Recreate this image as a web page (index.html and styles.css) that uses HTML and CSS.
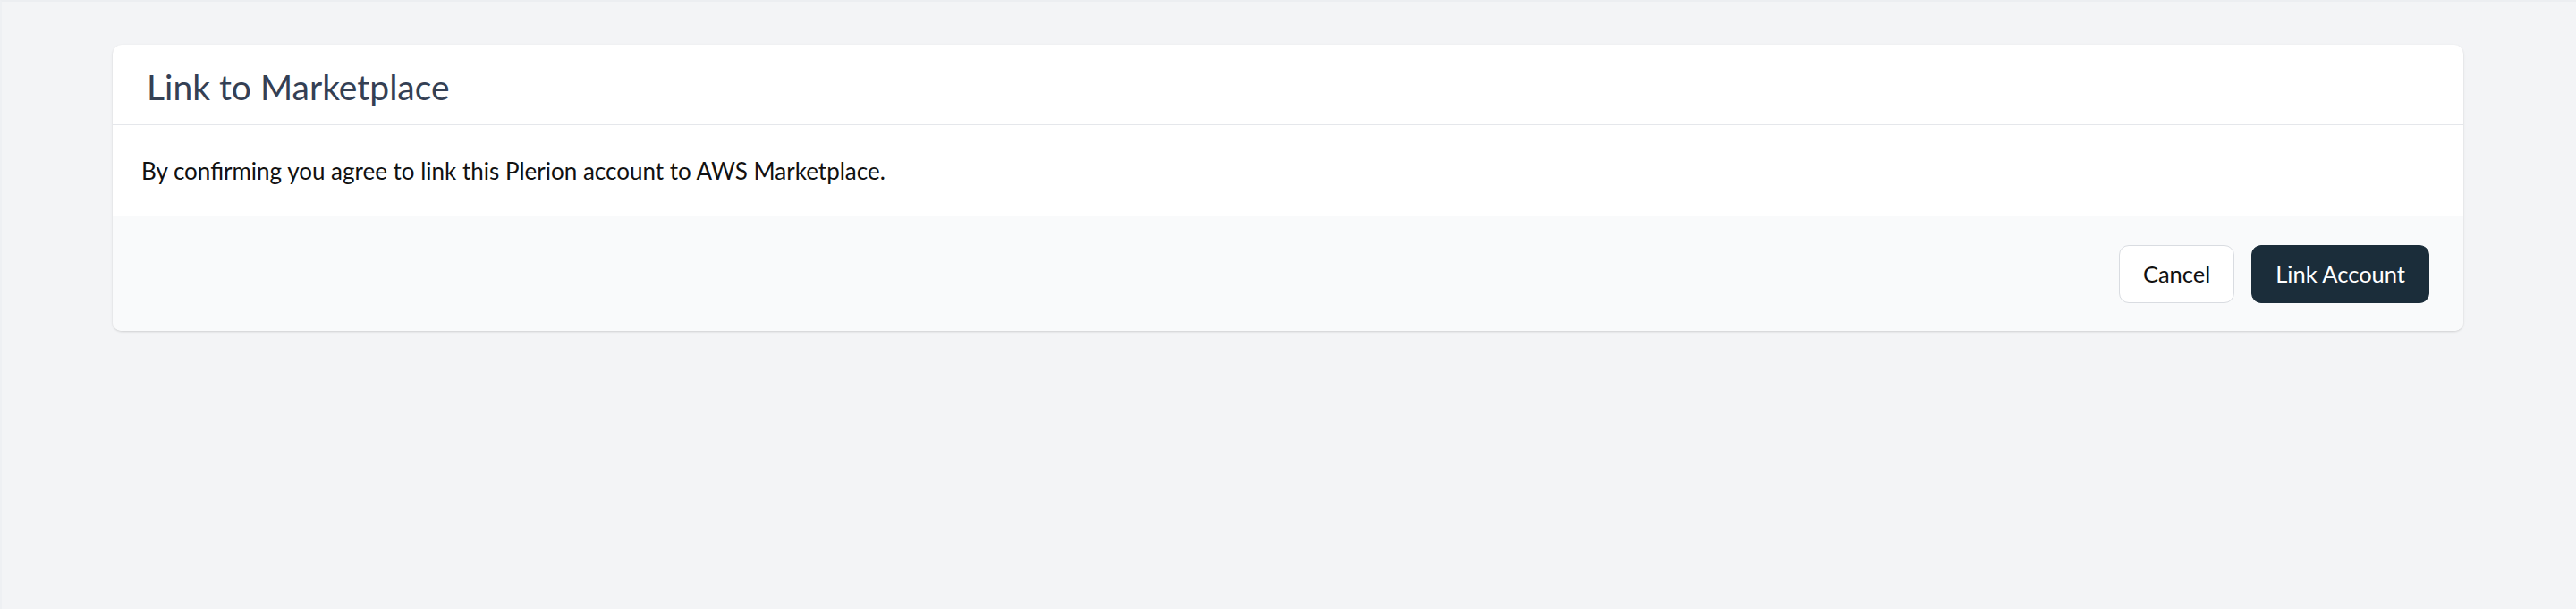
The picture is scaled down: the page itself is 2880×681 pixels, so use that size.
FILE: index.html
```html
<!DOCTYPE html>
<html lang="en">
<head>
<meta charset="utf-8">
<title>Link to Marketplace</title>
<link rel="stylesheet" href="styles.css">
</head>
<body>
<main class="page">
  <section class="card">
    <header class="card-header">
      <h1 class="card-title">Link to Marketplace</h1>
    </header>
    <div class="card-body">
      <p class="card-text">By confirming you agree to link this Plerion account to AWS Marketplace.</p>
    </div>
    <footer class="card-footer">
      <button class="btn btn-secondary" type="button">Cancel</button>
      <button class="btn btn-primary" type="button">Link Account</button>
    </footer>
  </section>
</main>
</body>
</html>
```
FILE: styles.css
```css
* { box-sizing: border-box; }
html, body { margin: 0; padding: 0; }
body {
  background: #f3f4f6;
  font-family: Lato, "Noto Sans", sans-serif;
  color: #111827;
  height: 681px;
  border-top: 2px solid #eceef1;
  border-left: 2px solid #eef0f3;
}
.page {
  padding: 48px 126px 0 124px;
}
.card {
  background: #ffffff;
  border-radius: 10px;
  box-shadow: 0 1px 3px rgba(0,0,0,0.10), 0 1px 2px rgba(0,0,0,0.06);
  overflow: hidden;
}
.card-header {
  height: 90px;
  display: flex;
  align-items: center;
  padding-left: 38px;
  padding-top: 4px;
  border-bottom: 1px solid #e5e7eb;
}
.card-title {
  margin: 0;
  font-size: 39px;
  font-weight: 400;
  color: #344054;
}
.card-body {
  height: 101px;
  display: flex;
  align-items: center;
  padding-left: 32px;
}
.card-text {
  margin: 0;
  font-size: 26px;
  color: #111111;
}
.card-footer {
  height: 129px;
  display: flex;
  justify-content: flex-end;
  align-items: center;
  gap: 19px;
  padding: 0 38px;
  background: #f9fafb;
  border-top: 1px solid #e5e7eb;
}
.btn {
  height: 65px;
  border-radius: 11px;
  font-family: inherit;
  font-size: 25.5px;
  padding: 0 26px;
  cursor: pointer;
}
.btn-secondary {
  background: #ffffff;
  color: #111111;
  border: 1.5px solid #d9dce1;
}
.btn-primary {
  background: #1b2d3a;
  color: #ffffff;
  border: 1px solid #1b2d3a;
}
```
